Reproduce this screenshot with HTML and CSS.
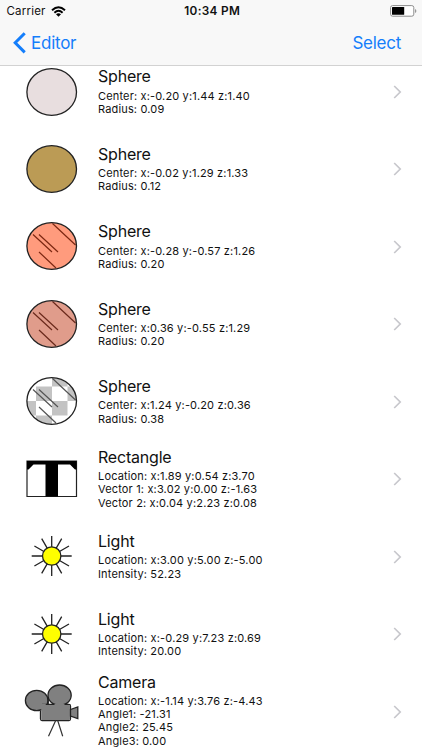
FILE: index.html
```
<!DOCTYPE html>
<html lang="en">
<head>
<meta charset="utf-8">
<title>Scene objects</title>
<link rel="stylesheet" href="styles.css">
</head>
<body>
<svg class="defs" width="0" height="0">
  <defs>
    <g id="glare"><path d="M42.5 13.5 65.5 35M23 24.5 42 42M29 24.5 48 42M29 42 46 58"/></g>
    <clipPath id="disc"><ellipse cx="41.7" cy="36" rx="24.8" ry="23.3"/></clipPath>
    <g id="sun">
      <path d="M41.7 16v40M21.7 36h40M31.7 18.7l20 34.6M51.7 18.7l-20 34.6M24.4 26l34.6 20M24.4 46l34.6-20" stroke="#222" stroke-width="1.3"/>
      <circle cx="41.7" cy="36" r="9.2" fill="#ff0" stroke="#222" stroke-width="1.3"/>
    </g>
    <path id="chevron" d="M1.2 1 7.2 7 1.2 13" fill="none" stroke="#c7c7cc" stroke-width="1.7"/>
  </defs>
</svg>
<header class="top">
  <div class="status">
    <div class="carrier"><span>Carrier</span>
      <svg width="15" height="11" viewBox="0 0 15 11" fill="none" stroke="#000" stroke-width="1.9"><path d="M1 4.3Q7.5-1.8 14 4.3M3.4 6.7Q7.5 2.9 11.6 6.7"/><path d="M7.5 10.8 5 8.2Q7.5 6.1 10 8.2Z" fill="#000" stroke="none"/></svg>
    </div>
    <div class="clock">10:34 PM</div>
    <svg class="battery" width="27" height="12" viewBox="0 0 27 12"><rect x=".6" y=".6" width="23.2" height="10.6" rx="2" fill="#fff" stroke="#8c8c8c"/><rect x="2" y="2" width="12.2" height="7.8" rx=".6"/><path d="M25 4q1.4.5 1.4 2T25 8z" fill="#999"/></svg>
  </div>
  <nav class="bar">
    <a class="back"><svg width="13" height="22" viewBox="0 0 13 22" fill="none" stroke="#147efb" stroke-width="3"><path d="M11.7 1.2 2.2 10.8 11.7 20.4"/></svg><span>Editor</span></a>
    <a class="select">Select</a>
  </nav>
</header>
<main class="list">
  <div class="row">
    <svg class="thumb" viewBox="0 0 84 72"><ellipse cx="41.7" cy="36" rx="24.8" ry="23.3" fill="#e8dedf" stroke="#222" stroke-width="1.3"/></svg>
    <div class="info"><h2>Sphere</h2><p>Center: x:-0.20 y:1.44 z:1.40</p><p>Radius: 0.09</p></div>
    <svg class="go" viewBox="0 0 9 14"><use href="#chevron"/></svg>
  </div>
  <div class="row">
    <svg class="thumb" viewBox="0 0 84 72"><ellipse cx="41.7" cy="36" rx="24.8" ry="23.3" fill="#bb9b55" stroke="#222" stroke-width="1.3"/></svg>
    <div class="info"><h2>Sphere</h2><p>Center: x:-0.02 y:1.29 z:1.33</p><p>Radius: 0.12</p></div>
    <svg class="go" viewBox="0 0 9 14"><use href="#chevron"/></svg>
  </div>
  <div class="row">
    <svg class="thumb" viewBox="0 0 84 72"><ellipse cx="41.7" cy="36" rx="24.8" ry="23.3" fill="#ff9b7d"/><use href="#glare" stroke="#7d2812" stroke-width="1.2"/><ellipse cx="41.7" cy="36" rx="24.8" ry="23.3" fill="none" stroke="#222" stroke-width="1.3"/></svg>
    <div class="info"><h2>Sphere</h2><p>Center: x:-0.28 y:-0.57 z:1.26</p><p>Radius: 0.20</p></div>
    <svg class="go" viewBox="0 0 9 14"><use href="#chevron"/></svg>
  </div>
  <div class="row">
    <svg class="thumb" viewBox="0 0 84 72"><ellipse cx="41.7" cy="36" rx="24.8" ry="23.3" fill="#e09c8b"/><use href="#glare" stroke="#6b2a1c" stroke-width="1.2"/><ellipse cx="41.7" cy="36" rx="24.8" ry="23.3" fill="none" stroke="#222" stroke-width="1.3"/></svg>
    <div class="info"><h2>Sphere</h2><p>Center: x:0.36 y:-0.55 z:1.29</p><p>Radius: 0.20</p></div>
    <svg class="go" viewBox="0 0 9 14"><use href="#chevron"/></svg>
  </div>
  <div class="row">
    <svg class="thumb" viewBox="0 0 84 72"><g clip-path="url(#disc)"><path d="M16 12h52v48H16z" fill="#fff"/><path d="M26 21.5h16V36H26zM42 6h15.5v15.5H42zM57.5 21.5h16V36h-16zM42 36h15.5v14.5H42zM10 36h16v14.5H10zM26 50.5h16V66H26z" fill="#c3c3c3"/></g><use href="#glare" stroke="#555" stroke-width="1.2"/><ellipse cx="41.7" cy="36" rx="24.8" ry="23.3" fill="none" stroke="#222" stroke-width="1.3"/></svg>
    <div class="info"><h2>Sphere</h2><p>Center: x:1.24 y:-0.20 z:0.36</p><p>Radius: 0.38</p></div>
    <svg class="go" viewBox="0 0 9 14"><use href="#chevron"/></svg>
  </div>
  <div class="row">
    <svg class="thumb" viewBox="0 0 84 72"><path d="M17 18h49.5v35.5H17z" fill="#fff" stroke="#222" stroke-width="1.2"/><path d="M17 18h49.5v8.5h-1.5l-5-5H48v32H35.5v-32H23.5l-5 5H17z"/></svg>
    <div class="info"><h2>Rectangle</h2><p>Location: x:1.89 y:0.54 z:3.70</p><p>Vector 1: x:3.02 y:0.00 z:-1.63</p><p>Vector 2: x:0.04 y:2.23 z:0.08</p></div>
    <svg class="go" viewBox="0 0 9 14"><use href="#chevron"/></svg>
  </div>
  <div class="row">
    <svg class="thumb" viewBox="0 0 84 72"><use href="#sun"/></svg>
    <div class="info"><h2>Light</h2><p>Location: x:3.00 y:5.00 z:-5.00</p><p>Intensity: 52.23</p></div>
    <svg class="go" viewBox="0 0 9 14"><use href="#chevron"/></svg>
  </div>
  <div class="row">
    <svg class="thumb" viewBox="0 0 84 72"><use href="#sun"/></svg>
    <div class="info"><h2>Light</h2><p>Location: x:-0.29 y:7.23 z:0.69</p><p>Intensity: 20.00</p></div>
    <svg class="go" viewBox="0 0 9 14"><use href="#chevron"/></svg>
  </div>
  <div class="row">
    <svg class="thumb" viewBox="0 0 84 72"><g fill="#808080" stroke="#222" stroke-width="1.3"><ellipse cx="26.7" cy="25.5" rx="11.3" ry="10.2"/><ellipse cx="49.6" cy="20.3" rx="11.6" ry="10.3"/><path d="M38.2 22v7.5H44.5M32 29.5h27q1.500 0 1.5 1.5V44q0 1.5-1.5 1.5H32q-1.5 0-1.5-1.5V35.5" fill="none"/><path d="M31.2 30H44l2-2h7l2 2h4q1 0 1 1V44q0 .9-1 .9H32.2q-1 0-1-1z" stroke="none"/><path d="M31 28.8h5l-1 3h-5z" stroke="none"/><path d="M60.5 34.5l7.3-2.5v11.5l-7.3-2.5z"/></g><path d="M45.7 45.5 38.5 61.3M47.7 45.5 52.7 61.3" stroke="#333" stroke-width="1.2"/></svg>
    <div class="info tall"><h2>Camera</h2><p>Location: x:-1.14 y:3.76 z:-4.43</p><p>Angle1: -21.31</p><p>Angle2: 25.45</p><p>Angle3: 0.00</p></div>
    <svg class="go" viewBox="0 0 9 14"><use href="#chevron"/></svg>
  </div>
</main>
</body>
</html>
```
FILE: styles.css
```
* { box-sizing: border-box; }
body {
  margin: 0;
  width: 422px;
  height: 750px;
  overflow: hidden;
  background: #fff;
  color: #111;
  font-family: Inter, "Liberation Sans", sans-serif;
}
h2, p { margin: 0; font-weight: 400; white-space: nowrap; }
.defs { display: block; }
.top {
  position: relative;
  z-index: 1;
  height: 66px;
  background: #f8f8f8;
  border-bottom: 1px solid #d2d2d2;
}
.status {
  display: grid;
  grid-template-columns: 1fr auto 1fr;
  align-items: center;
  height: 22px;
  padding: 0 5px 0 6.5px;
}
.carrier { display: flex; align-items: center; gap: 5.5px; font-size: 11.5px; letter-spacing: .2px; }
.clock { font-size: 11.8px; font-weight: 600; letter-spacing: .35px; padding-left: 1px; }
.battery { justify-self: end; }
.bar {
  display: flex;
  align-items: center;
  justify-content: space-between;
  height: 42px;
  padding: 0 21px 0 13px;
  color: #147efb;
  font-size: 17px;
  letter-spacing: -.25px;
}
.back { display: flex; align-items: center; gap: 5px; }
.list { margin-top: -13.2px; }
.row {
  display: flex;
  align-items: center;
  height: 77.45px;
  padding: 0 20px 0 10px;
}
.thumb { flex: none; width: 84px; height: 72px; }
.info { flex: 1; margin-left: 4px; }
.info h2 { font-size: 16px; line-height: 20px; margin: -.5px 0 3.2px; letter-spacing: -.2px; }
.info p { font-size: 11px; line-height: 13.2px; letter-spacing: .16px; }
.info.tall { margin-top: -2px; }
.go { flex: none; width: 9px; height: 14px; margin-top: 1px; }
```
